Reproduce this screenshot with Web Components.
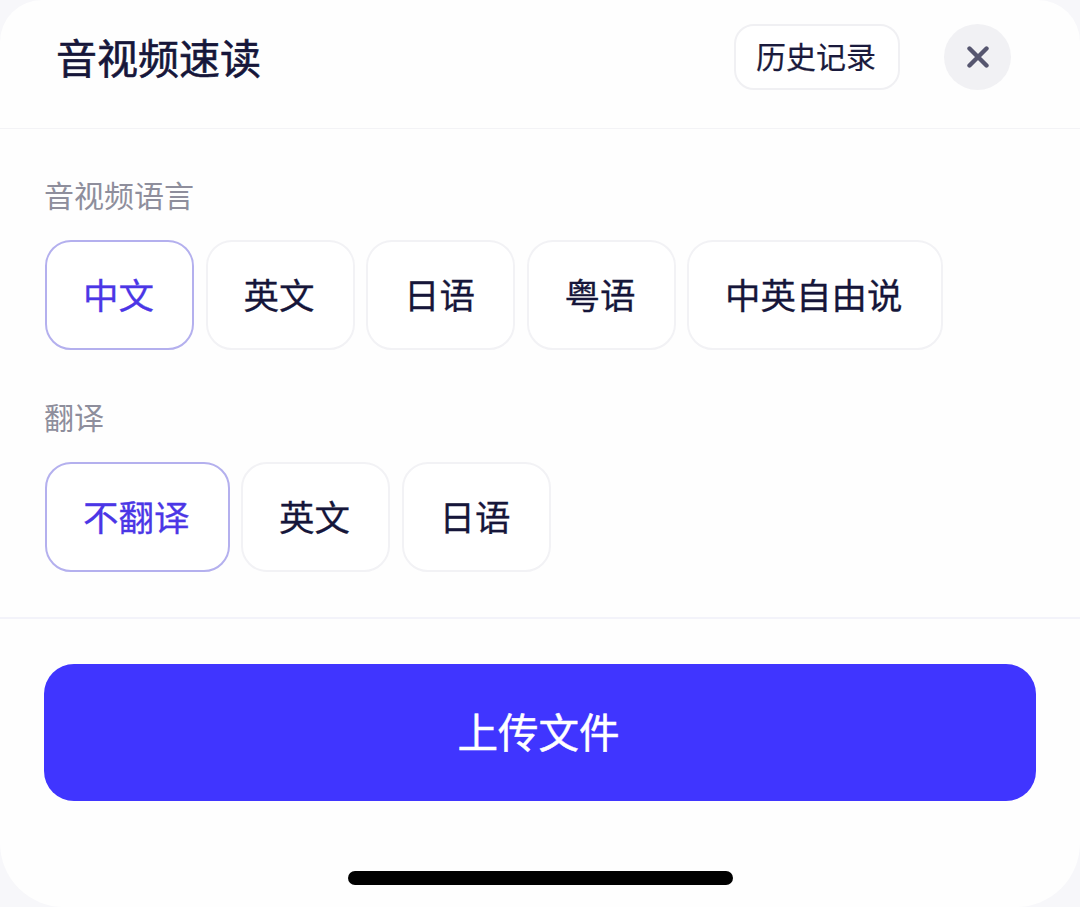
<!DOCTYPE html>
<html lang="zh">
<head>
<meta charset="utf-8">
<title>音视频速读</title>
<style>
  html, body { margin: 0; height: 100%; background: #f7f7fa; }
  body { font-family: "Noto Sans CJK SC", "Liberation Sans", sans-serif; color: #16163a; }
</style>
</head>
<body>
<bottom-sheet>
  <sheet-header slot="header" heading="音视频速读" action="历史记录"></sheet-header>
  <option-group label="音视频语言">
    <option-chip selected>中文</option-chip>
    <option-chip>英文</option-chip>
    <option-chip>日语</option-chip>
    <option-chip>粤语</option-chip>
    <option-chip>中英自由说</option-chip>
  </option-group>
  <option-group label="翻译">
    <option-chip selected>不翻译</option-chip>
    <option-chip>英文</option-chip>
    <option-chip>日语</option-chip>
  </option-group>
  <primary-button slot="footer">上传文件</primary-button>
</bottom-sheet>

<script>
class BottomSheet extends HTMLElement {
  constructor() {
    super();
    this.attachShadow({ mode: 'open' });
    this.shadowRoot.innerHTML = `
      <style>
        :host {
          display: flex;
          flex-direction: column;
          height: 907px;
          box-sizing: border-box;
          background: #fefefe;
          border-radius: 42px 42px 64px 64px;
          overflow: hidden;
        }
        #main {
          padding: 45px 44px 45px 45px;
          display: flex;
          flex-direction: column;
          gap: 46px;
          border-top: 1px solid #f3f3f6;
          border-bottom: 2px solid #f3f3fa;
        }
        #footer {
          flex: 1;
          display: flex;
          flex-direction: column;
          padding: 45px 44px 22px;
        }
        #indicator {
          align-self: center;
          width: 385px;
          height: 14px;
          margin-top: auto;
          background: #000;
          border-radius: 7px;
        }
      </style>
      <slot name="header"></slot>
      <section id="main"><slot></slot></section>
      <section id="footer">
        <slot name="footer"></slot>
        <div id="indicator"></div>
      </section>
    `;
  }
}

class SheetHeader extends HTMLElement {
  constructor() {
    super();
    this.attachShadow({ mode: 'open' });
    this.shadowRoot.innerHTML = `
      <style>
        :host {
          display: flex;
          align-items: center;
          height: 128px;
          box-sizing: border-box;
          padding: 0 69px 14px 56px;
        }
        h1 {
          flex: 1;
          margin: 0 0 2px;
          font-size: 41px;
          line-height: 60px;
          font-weight: 400;
          -webkit-text-stroke: 0.6px currentColor;
          color: #16163a;
        }
        button {
          font: inherit;
          font-size: 30px;
          line-height: 40px;
          color: #1a1a3c;
          width: 166px;
          height: 66px;
          padding: 0 2px 5px 0;
          margin-right: 44px;
          background: #fff;
          border: 2px solid #f0f0f3;
          border-radius: 20px;
          -webkit-text-stroke: 0.2px currentColor;
        }
        #close {
          width: 67px;
          height: 66px;
          border-radius: 50%;
          background: #f1f1f4;
          display: flex;
          align-items: center;
          justify-content: center;
        }
        svg { width: 22px; height: 22px; display: block; }
      </style>
      <h1></h1>
      <button type="button"></button>
      <div id="close">
        <svg viewBox="0 0 22 22"><path d="M2.5 2.5 L19.5 19.5 M19.5 2.5 L2.5 19.5" stroke="#56566f" stroke-width="4.4" stroke-linecap="round"/></svg>
      </div>
    `;
    this.shadowRoot.querySelector('h1').textContent = this.getAttribute('heading');
    this.shadowRoot.querySelector('button').textContent = this.getAttribute('action');
  }
}

class OptionGroup extends HTMLElement {
  constructor() {
    super();
    this.attachShadow({ mode: 'open' });
    this.shadowRoot.innerHTML = `
      <style>
        :host { display: block; }
        #label {
          font-size: 30px;
          line-height: 40px;
          color: #8e8e9c;
          margin-bottom: 26px;
          margin-left: -1px;
        }
        #chips {
          display: flex;
          gap: 11.5px;
        }
      </style>
      <div id="label"></div>
      <div id="chips"><slot></slot></div>
    `;
    this.shadowRoot.querySelector('#label').textContent = this.getAttribute('label');
  }
}

class OptionChip extends HTMLElement {
  constructor() {
    super();
    this.attachShadow({ mode: 'open' });
    this.shadowRoot.innerHTML = `
      <style>
        :host {
          display: flex;
          align-items: center;
          justify-content: center;
          height: 110px;
          box-sizing: border-box;
          padding: 0 38px 3px 36px;
          font-size: 35.5px;
          color: #16163a;
          background: #fff;
          border: 2px solid #f2f2f5;
          border-radius: 26px;
          -webkit-text-stroke: 0.3px currentColor;
        }
        :host([selected]) {
          color: #4b36e6;
          border-color: #b4b0ee;
        }
      </style>
      <slot></slot>
    `;
  }
}

class PrimaryButton extends HTMLElement {
  constructor() {
    super();
    this.attachShadow({ mode: 'open' });
    this.shadowRoot.innerHTML = `
      <style>
        :host {
          display: flex;
          align-items: center;
          justify-content: center;
          height: 137px;
          box-sizing: border-box;
          padding: 0 3px 4px 0;
          font-size: 40.5px;
          font-weight: 400;
          -webkit-text-stroke: 0.5px currentColor;
          color: #fff;
          background: #4035ff;
          border-radius: 30px;
        }
      </style>
      <slot></slot>
    `;
  }
}

customElements.define('bottom-sheet', BottomSheet);
customElements.define('sheet-header', SheetHeader);
customElements.define('option-group', OptionGroup);
customElements.define('option-chip', OptionChip);
customElements.define('primary-button', PrimaryButton);
</script>
</body>
</html>
